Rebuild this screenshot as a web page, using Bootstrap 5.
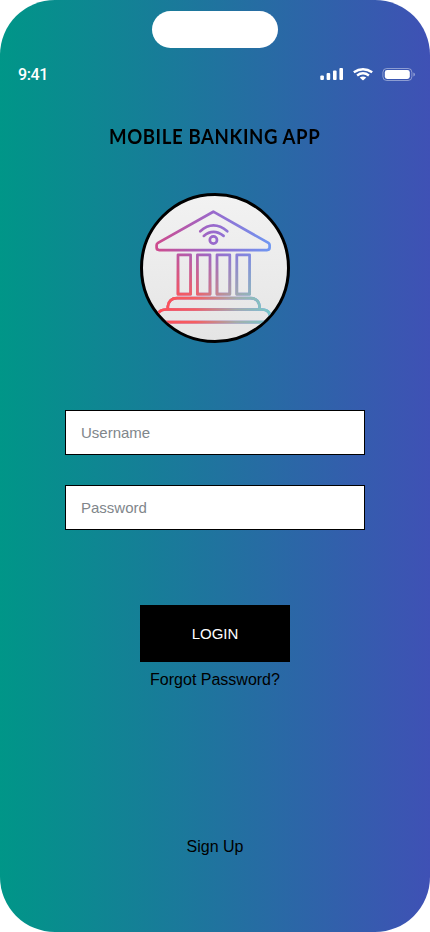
<!DOCTYPE html>
<html lang="en">
<head>
<meta charset="utf-8">
<meta name="viewport" content="width=device-width, initial-scale=1">
<title>Mobile Banking App</title>
<link rel="stylesheet" href="https://cdn.jsdelivr.net/npm/bootstrap@5.3.0/dist/css/bootstrap.min.css">
<style>
body { font-family: "Liberation Sans", Arial, sans-serif; background: #fff; }
.phone { width: 430px; height: 932px; border-radius: 55px; background: linear-gradient(90deg, #009688, #3f51b5); padding-top: 11px; }
.island { width: 126px; height: 37px; }
.status { height: 24px; margin-top: 14px; padding: 0 15px 0 18px; }
.clock { font: 500 16px/24px Roboto, sans-serif; letter-spacing: -.4px; padding-top: 2px; }
.app-title { font: 700 20px/26px Lato, sans-serif; letter-spacing: .65px; transform: scaleX(.93); margin-top: 37px; color: #000; white-space: nowrap; }
.logo { width: 150px; height: 150px; border: 3px solid #000; margin-top: 44px; background: linear-gradient(#f2f2f2, #e5e5e5); }
.login-form { width: 300px; margin-top: 67px; gap: 30px; }
.field { height: 45px; border: 1px solid #000; font-size: 15px; padding: 0 15px; }
.field::placeholder { color: #80868b; }
.login-btn { width: 150px; height: 57px; margin-top: 45px; background: #000; color: #fff; font-size: 15px; padding: 2px 0 0; }
.plain-link { color: #000; font-size: 16px; line-height: 24px; }
.forgot { margin-top: 6px; }
.signup { margin-top: 143px; }
</style>
</head>
<body>
<main class="phone d-flex flex-column align-items-center overflow-hidden">
  <div class="island bg-white rounded-pill flex-shrink-0"></div>
  <div class="status w-100 d-flex justify-content-between align-items-center text-white">
    <span class="clock">9:41</span>
    <svg width="95" height="14" viewBox="320 67 95 14" fill="#fff" aria-hidden="true">
      <rect x="320.3" y="75.4" width="3.6" height="4.6" rx="1"/>
      <rect x="326.6" y="73" width="3.6" height="7" rx="1"/>
      <rect x="333" y="70.5" width="3.6" height="9.5" rx="1"/>
      <rect x="339.4" y="68" width="3.6" height="12" rx="1"/>
      <g fill="none" stroke="#fff" stroke-width="2.4">
        <path d="M353.8 72.3Q358.3 69.2 363 69.2T372.2 72.3"/>
        <path d="M357.1 75.5Q360 73.3 363 73.3T368.9 75.5"/>
      </g>
      <path d="M359.7 77.6Q363 75.2 366.3 77.6L363.6 80.1Q363 80.5 362.4 80.1Z"/>
      <rect x="382.9" y="68.5" width="29" height="12" rx="3.8" fill="none" stroke="#fff" stroke-opacity=".42"/>
      <rect x="384.8" y="70" width="25" height="9" rx="2.4"/>
      <path d="M413.4 72.6Q415 73.2 415 74.6T413.4 76.6Z" fill-opacity=".45"/>
    </svg>
  </div>
  <h1 class="app-title mb-0">MOBILE BANKING APP</h1>
  <div class="logo rounded-circle overflow-hidden flex-shrink-0">
    <svg class="d-block" width="144" height="144" viewBox="143 196 144 144" role="img" aria-label="Bank">
      <defs>
        <linearGradient id="roofTone" gradientUnits="userSpaceOnUse" x1="155" y1="0" x2="271" y2="0">
          <stop offset="0" stop-color="#cf4b8c"/><stop offset=".5" stop-color="#9969cc"/><stop offset="1" stop-color="#6e97f2"/>
        </linearGradient>
        <linearGradient id="baseTone" gradientUnits="userSpaceOnUse" x1="155" y1="0" x2="271" y2="0">
          <stop offset="0" stop-color="#ff4c55"/><stop offset=".35" stop-color="#f46061"/><stop offset=".7" stop-color="#a4adab"/><stop offset="1" stop-color="#77c9ca"/>
        </linearGradient>
        <linearGradient id="fade" gradientUnits="userSpaceOnUse" x1="0" y1="252" x2="0" y2="298">
          <stop offset="0" stop-color="#000"/><stop offset="1" stop-color="#fff"/>
        </linearGradient>
        <mask id="lower" maskUnits="userSpaceOnUse" x="143" y="196" width="144" height="144"><rect x="143" y="196" width="144" height="144" fill="url(#fade)"/></mask>
        <g id="bank" fill="none" stroke-width="2.7" stroke-linejoin="round">
          <path d="M213.3 211.7L268.4 242.9Q269.6 243.7 269.6 245V247.6Q269.6 250.1 267 250.1H159.3Q156.6 250.1 156.6 247.6V245Q156.6 243.7 158 242.9Z"/>
          <path d="M200.3 231.3Q213.3 219.6 227.3 231.3M203.8 235.9Q213.3 227.7 223.6 235.9" stroke-linecap="round"/>
          <circle cx="213.4" cy="240" r="3.6"/>
          <rect x="178" y="254.8" width="12.6" height="39.4"/>
          <rect x="197.4" y="254.8" width="12.6" height="39.4"/>
          <rect x="217" y="254.8" width="12.8" height="39.4"/>
          <rect x="236.8" y="254.8" width="12.8" height="39.4"/>
          <path d="M167.8 309V306.5Q169 298.1 177 298.1H250.5Q258.6 298.1 259.6 306.5V309M157 319Q157 309.5 166 309.5H262Q270.5 309.5 270.5 319M157 322.2H271"/>
        </g>
      </defs>
      <use href="#bank" stroke="url(#roofTone)"/>
      <use href="#bank" stroke="url(#baseTone)" mask="url(#lower)"/>
    </svg>
  </div>
  <form class="login-form d-flex flex-column align-items-center">
    <input class="field form-control rounded-0" type="text" placeholder="Username" aria-label="Username">
    <input class="field form-control rounded-0" type="password" placeholder="Password" aria-label="Password">
    <button class="login-btn btn rounded-0 border-0" type="button">LOGIN</button>
  </form>
  <a class="plain-link forgot text-decoration-none" href="#">Forgot Password?</a>
  <a class="plain-link signup text-decoration-none" href="#">Sign Up</a>
</main>
<script src="https://cdn.jsdelivr.net/npm/bootstrap@5.3.0/dist/js/bootstrap.bundle.min.js"></script>
</body>
</html>
